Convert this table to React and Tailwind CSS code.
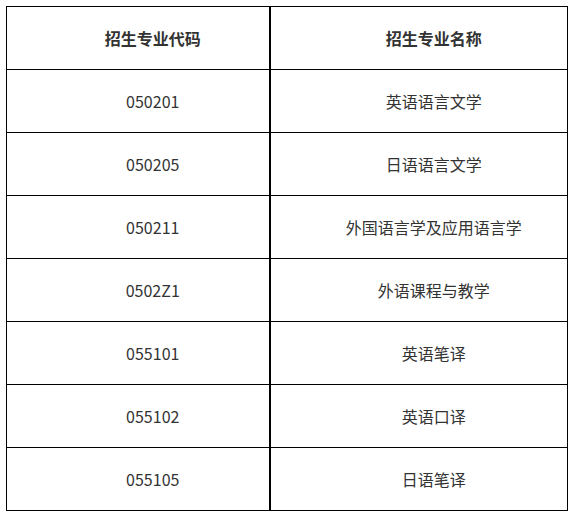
import React from 'react';

const rows = [
  ["050201", "英语语言文学"],
  ["050205", "日语语言文学"],
  ["050211", "外国语言学及应用语言学"],
  ["0502Z1", "外语课程与教学"],
  ["055101", "英语笔译"],
  ["055102", "英语口译"],
  ["055105", "日语笔译"],
];

const App = () => {
  return (
    <div className="w-[575px] h-[516px] bg-white pt-[6px] pl-[6px] font-['Noto_Sans_CJK_SC','Noto_Sans',sans-serif] text-[16px] text-[#333]">
      <table className="w-[562px] border-collapse border border-black">
        <thead>
          <tr className="h-[63px]">
            <th className="w-[263px] border-r-2 border-b border-black pl-[36px] pr-[6px] text-center font-bold">招生专业代码</th>
            <th className="border-b border-black pl-[36px] pr-[6px] text-center font-bold">招生专业名称</th>
          </tr>
        </thead>
        <tbody>
          {rows.map((r, i) => (
            <tr key={i} className="h-[63px]">
              <td className="border-r-2 border-b border-black pl-[36px] pr-[6px] text-center">{r[0]}</td>
              <td className="border-b border-black pl-[36px] pr-[6px] text-center">{r[1]}</td>
            </tr>
          ))}
        </tbody>
      </table>
    </div>
  );
};

export default App;
